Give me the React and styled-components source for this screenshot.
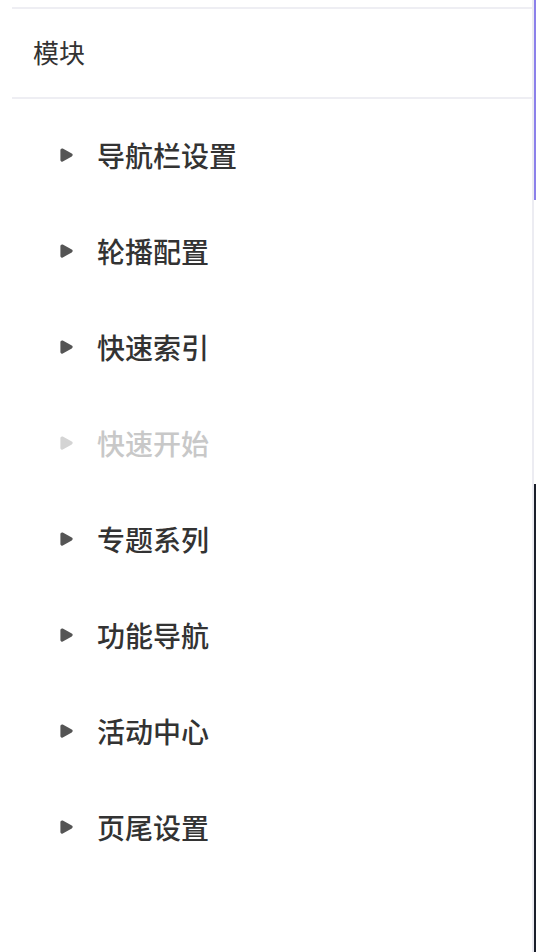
import React from "react";
import styled, { createGlobalStyle } from "styled-components";

const Global = createGlobalStyle`
  html, body { margin: 0; padding: 0; background: #ffffff; }
  body { font-family: "Noto Sans CJK SC", "Noto Sans", sans-serif; }
`;

const Page = styled.div`
  display: flex;
  width: 536px;
  height: 952px;
  overflow: hidden;
  background: #ffffff;
`;

const Panel = styled.div`
  flex: 1;
  padding: 7px 0 0 12px;
  border-right: 2px solid #ececf2;
  box-sizing: border-box;
`;

const Rail = styled.div`
  width: 2px;
  display: flex;
  flex-direction: column;
`;

const RailSeg = styled.div`
  height: ${(p) => (p.$h ? `${p.$h}px` : "auto")};
  flex: ${(p) => (p.$grow ? 1 : "none")};
  background: ${(p) => p.$color};
`;

const Header = styled.div`
  height: 92px;
  box-sizing: border-box;
  padding: 0 0 3px 21px;
  display: flex;
  align-items: center;
  border-top: 2px solid #eeeef3;
  border-bottom: 2px solid #eeeef3;
  font-size: 26px;
  font-weight: 400;
  color: #333333;
`;

const List = styled.div`
  padding-top: 8px;
  display: flex;
  flex-direction: column;
`;

const Item = styled.div`
  height: 96px;
  display: flex;
  align-items: center;
  padding-left: 48px;
  gap: 24px;
  font-size: 28px;
  font-weight: 500;
  color: ${(p) => (p.$disabled ? "#c8c8c8" : "#333333")};
`;

const Arrow = ({ color }) => (
  <svg width="13" height="14" viewBox="0 0 13 14" style={{ flex: "none" }}>
    <path
      d="M2 2 L11 7 L2 12 Z"
      fill={color}
      stroke={color}
      strokeWidth="3.2"
      strokeLinejoin="round"
    />
  </svg>
);

const items = [
  { label: "导航栏设置" },
  { label: "轮播配置" },
  { label: "快速索引" },
  { label: "快速开始", disabled: true },
  { label: "专题系列" },
  { label: "功能导航" },
  { label: "活动中心" },
  { label: "页尾设置" },
];

export default function App() {
  return (
    <>
      <Global />
      <Page>
        <Panel>
          <Header>模块</Header>
          <List>
            {items.map((it) => (
              <Item key={it.label} $disabled={it.disabled}>
                <Arrow color={it.disabled ? "#d4d4d4" : "#555555"} />
                {it.label}
              </Item>
            ))}
          </List>
        </Panel>
        <Rail>
          <RailSeg $h={200} $color="#8b80ea" />
          <RailSeg $h={284} $color="#ffffff" />
          <RailSeg $grow $color="#1b1f2b" />
        </Rail>
      </Page>
    </>
  );
}
